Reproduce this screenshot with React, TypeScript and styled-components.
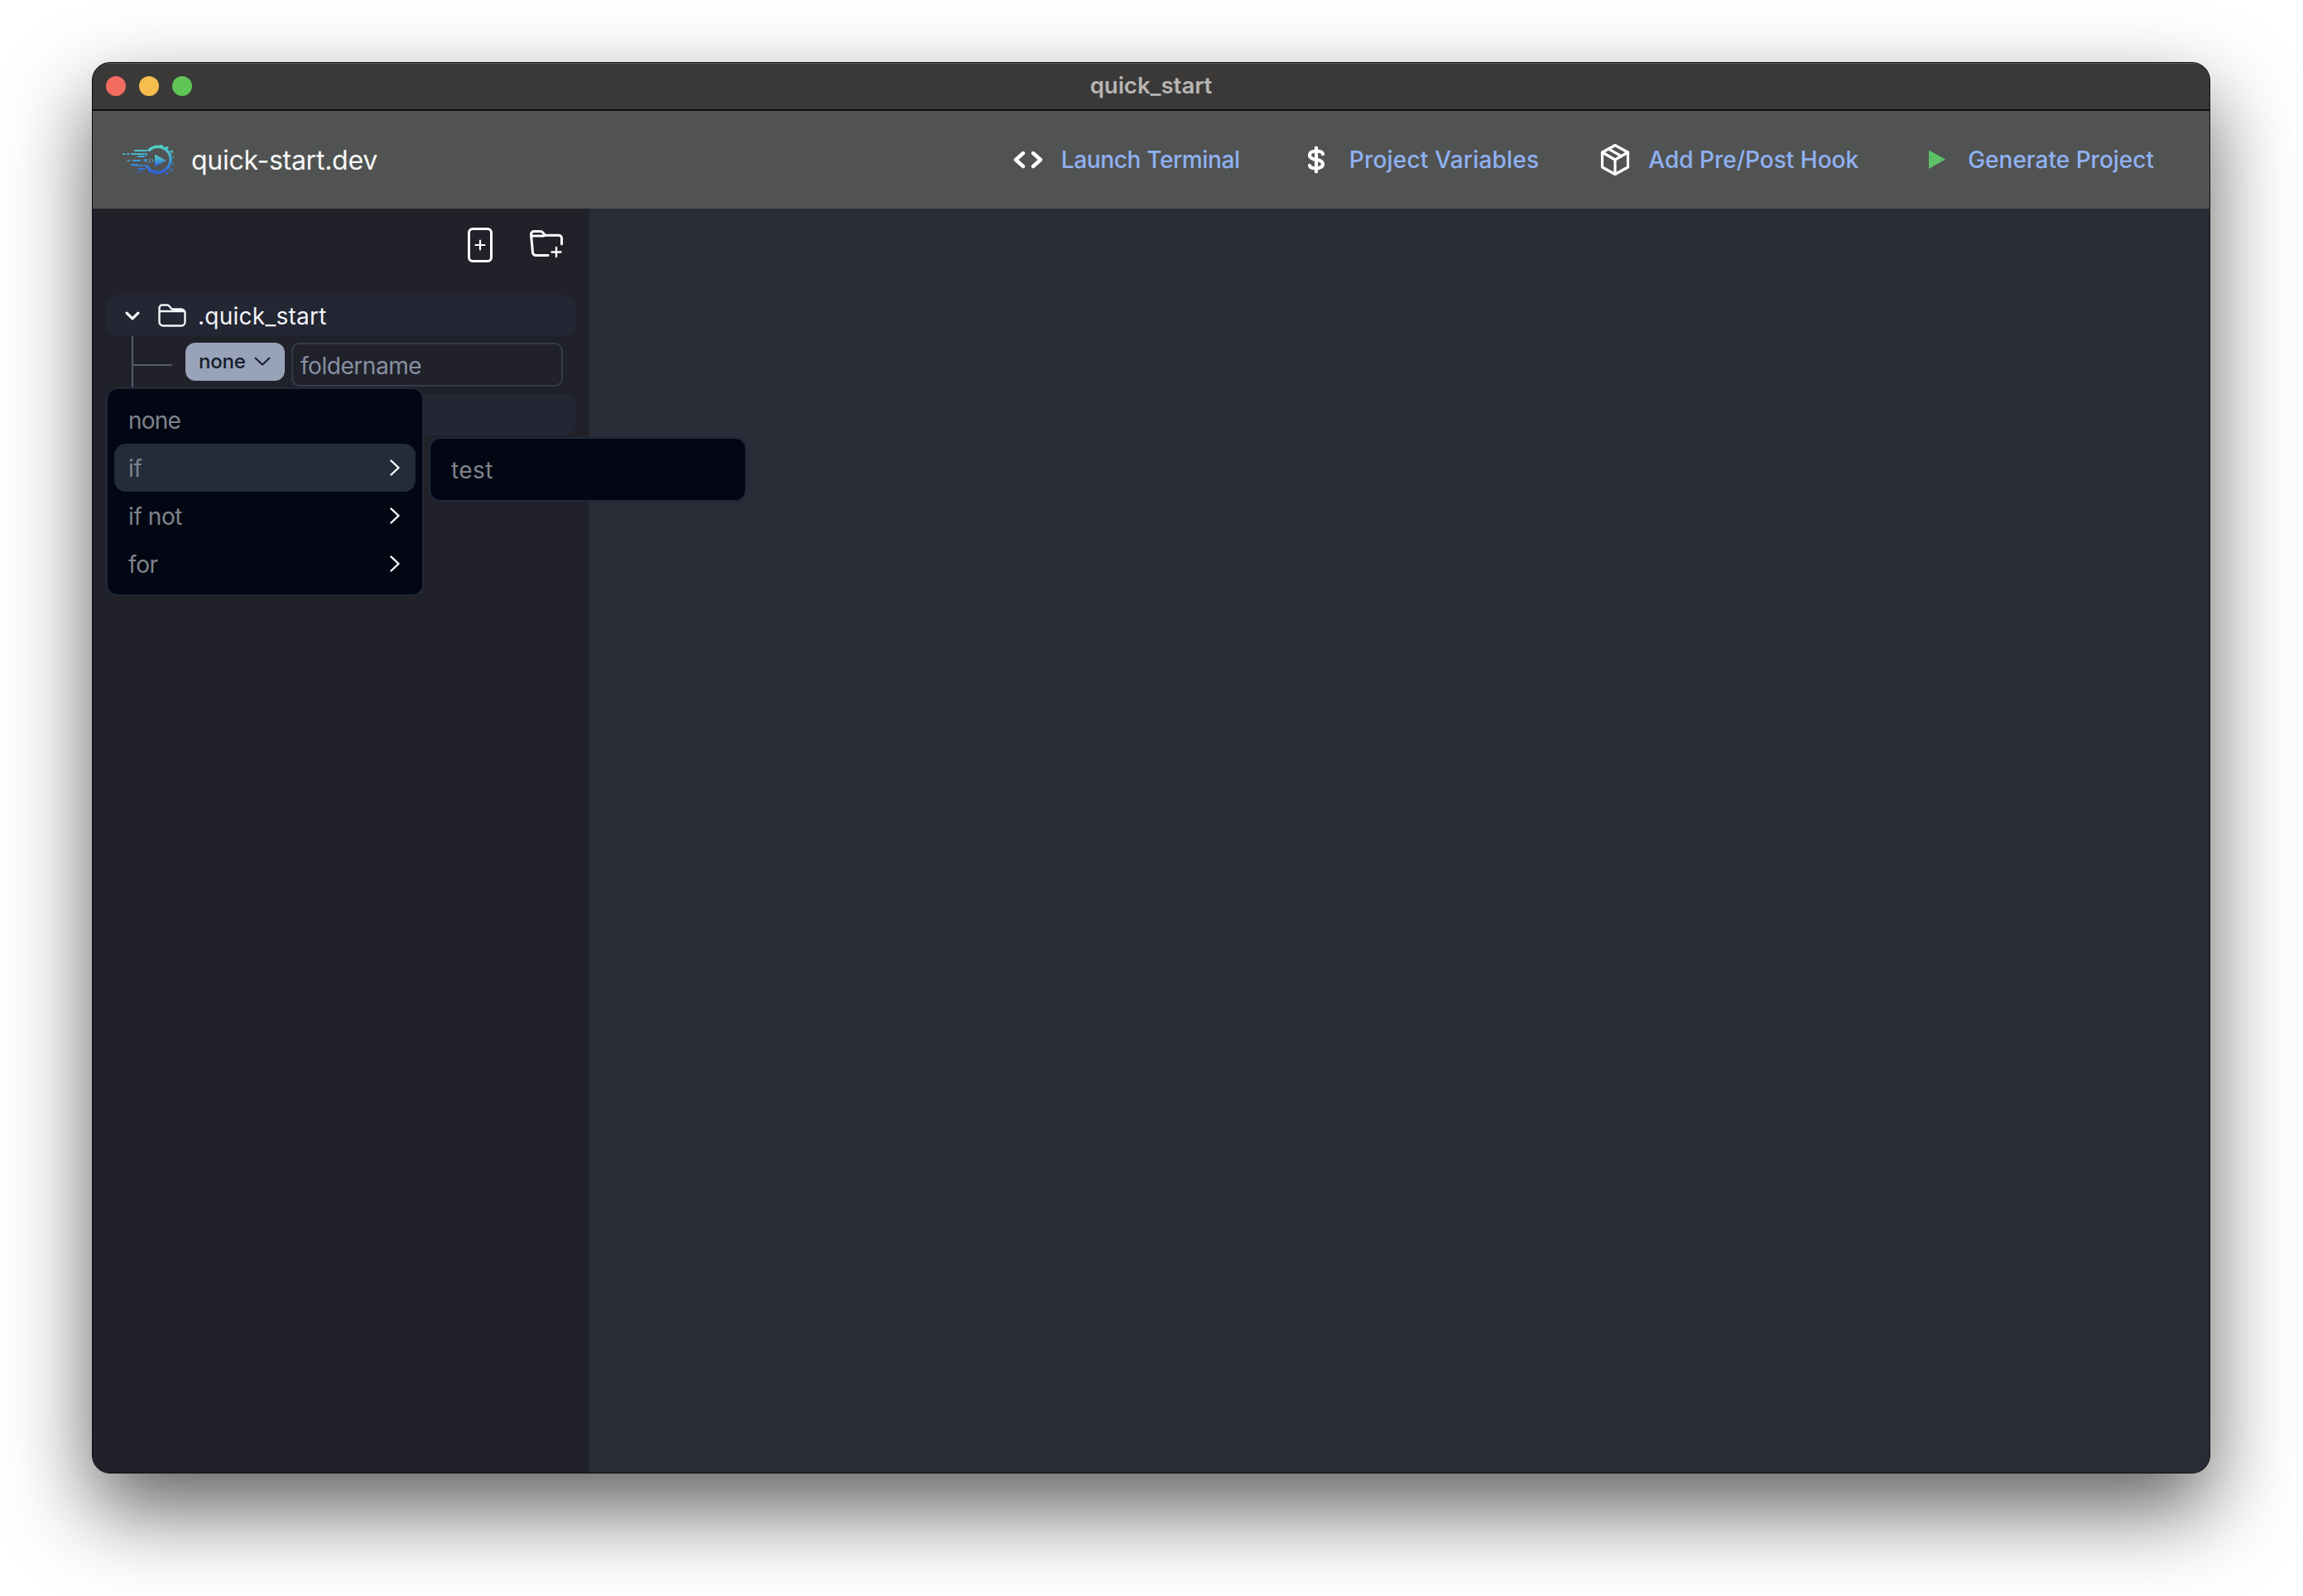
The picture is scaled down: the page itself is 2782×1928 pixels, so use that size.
import React from "react";
import styled, { createGlobalStyle } from "styled-components";

const Global = createGlobalStyle`
  html, body { margin: 0; padding: 0; background: #fff; width: 2782px; height: 1928px; overflow: hidden; }
  #root { width: 100%; height: 100%; }
  * { box-sizing: border-box; }
`;

const Desktop = styled.div`
  width: 2782px;
  height: 1928px;
  padding: 75px 112px 148px 111px;
  background: #fff;
  font-family: Inter, "Liberation Sans", sans-serif;
`;

const Window = styled.div`
  width: 100%;
  height: 100%;
  display: flex;
  flex-direction: column;
  border: 1px solid #0c0c0c;
  border-radius: 22px;
  overflow: hidden;
  background: #292b36;
  box-shadow: 0 44px 100px rgba(0, 0, 0, 0.62);
`;

const TitleBar = styled.div`
  position: relative;
  flex: 0 0 58px;
  display: flex;
  align-items: center;
  justify-content: center;
  background: #3a3938;
  border-bottom: 2px solid #0e0e0e;
  box-shadow: inset 0 1px 0 #5e5e5e;
`;

const Lights = styled.div`
  position: absolute;
  left: 16px;
  top: 16px;
  display: flex;
  gap: 16px;
`;

const Light = styled.span<{ $c: string }>`
  width: 24px;
  height: 24px;
  border-radius: 50%;
  background: ${(p) => p.$c};
`;

const WindowTitle = styled.div`
  font-size: 27.5px;
  font-weight: 600;
  color: #b6b6b4;
  transform: translateY(-1px);
`;

const Header = styled.header`
  flex: 0 0 118px;
  display: flex;
  align-items: center;
  justify-content: space-between;
  padding: 0 67px 0 36px;
  background: #515352;
`;

const Brand = styled.div`
  display: flex;
  align-items: center;
  gap: 21px;
`;

const BrandName = styled.div`
  font-size: 32px;
  font-weight: 400;
  letter-spacing: -0.25px;
  color: #f7f8f8;
`;

const Nav = styled.nav`
  display: flex;
  align-items: center;
  gap: 72px;
`;

const NavItem = styled.div<{ $track?: number }>`
  display: flex;
  align-items: center;
  gap: 20px;
  font-size: 28px;
  font-weight: 500;
  letter-spacing: ${(p) => p.$track ?? 0}px;
  color: #8fb1f2;
`;

const NavIcon = styled.span`
  width: 40px;
  height: 40px;
  display: flex;
  align-items: center;
  justify-content: center;
`;

const Body = styled.div`
  flex: 1;
  display: flex;
  min-height: 0;
`;

const Sidebar = styled.aside`
  position: relative;
  flex: 0 0 600px;
  padding: 0 16px;
  background: #21212a;
`;

const Main = styled.main`
  flex: 1;
  background: #292b36;
  border-left: 1px solid #2a2f3d;
`;

const Toolbar = styled.div`
  height: 104px;
  display: flex;
  justify-content: flex-end;
  align-items: flex-start;
  gap: 45px;
  padding: 23px 16px 0 0;
`;

const FolderAddWrap = styled.span`
  display: block;
  margin-top: 3px;
  line-height: 0;
`;

const TreeRow = styled.div`
  height: 50px;
  display: flex;
  align-items: center;
  padding: 2px 0 0 23px;
  background: #232633;
  border-radius: 14px;
  font-size: 28px;
  letter-spacing: 0.25px;
  color: #f4f5f7;
`;

const TreeChevron = styled.span`
  display: flex;
  margin-top: -2px;
`;

const FolderIcon = styled.svg`
  margin: -2px 14px 0 22px;
`;

const ChildRow = styled.div`
  height: 70px;
  display: flex;
  align-items: flex-start;
  padding-left: 31px;
`;

const Connector = styled.div`
  position: relative;
  flex: 0 0 49px;
  height: 63px;
  margin-right: 16px;
  border-left: 2px solid #555b69;
  &::after {
    content: "";
    position: absolute;
    left: 0;
    right: 0;
    top: 34px;
    height: 2px;
    background: #555b69;
  }
`;

const SelectButton = styled.div`
  flex: 0 0 120px;
  height: 46px;
  margin-top: 8px;
  display: flex;
  align-items: center;
  gap: 10px;
  padding-left: 16px;
  padding-bottom: 2px;
  border-radius: 12px;
  background: #98a2b8;
  font-size: 24px;
  font-weight: 500;
  letter-spacing: -0.2px;
  color: #161c2b;
`;

const NameInput = styled.div`
  flex: 0 0 328px;
  height: 53px;
  margin: 8px 0 0 8px;
  display: flex;
  align-items: center;
  padding: 2px 0 0 9px;
  border: 2px solid #343b4a;
  border-radius: 10px;
  font-size: 28px;
  letter-spacing: -0.45px;
  color: #8690a3;
`;

const EmptyRow = styled(TreeRow)``;

const Menu = styled.div<{ $left: number; $top: number }>`
  position: absolute;
  left: ${(p) => p.$left}px;
  top: ${(p) => p.$top}px;
  width: 384px;
  padding: 8px;
  background: #020713;
  border: 2px solid #1e293b;
  border-radius: 14px;
`;

const MenuItem = styled.div<{ $active?: boolean; $track?: number }>`
  height: 58px;
  display: flex;
  align-items: center;
  justify-content: space-between;
  padding: 2px 19px 0 17px;
  border-radius: 14px;
  background: ${(p) => (p.$active ? "#222c3b" : "transparent")};
  font-size: 28px;
  letter-spacing: ${(p) => p.$track ?? -0.4}px;
  color: #7f848b;
`;

const MenuChevron = styled.svg`
  margin-top: -2px;
`;

const Logo = () => (
  <svg width="62" height="36" viewBox="0 0 62 36" fill="none">
    <defs>
      <linearGradient id="lg" x1="0" y1="0" x2="0" y2="1">
        <stop offset="0" stopColor="#55d8c4" />
        <stop offset="0.5" stopColor="#3fa0cf" />
        <stop offset="1" stopColor="#2c55d4" />
      </linearGradient>
      <linearGradient id="pl" x1="0" y1="0" x2="0" y2="36" gradientUnits="userSpaceOnUse">
        <stop offset="0" stopColor="#55d8c4" />
        <stop offset="0.5" stopColor="#3f9fd6" />
        <stop offset="1" stopColor="#2c55d4" />
      </linearGradient>
    </defs>
    <g stroke="url(#pl)" strokeWidth="2" strokeLinecap="round">
      <path d="M1 11h1.5M6 11h1.5M15 7h14M11 11h15M19 14h7M13 19h8M11 24h7M19 29h7" />
      <path d="M6 19h3M15 25h12M21 32h2M16 33h1" strokeWidth="1.6" />
    </g>
    <circle cx="45" cy="19" r="18" stroke="url(#pl)" strokeWidth="2.6" strokeDasharray="3 4.4" transform="rotate(10 45 19)" />
    <path d="M31 7.5A15.5 15.5 0 1 1 29 25" stroke="url(#pl)" strokeWidth="3.4" fill="none" />
    <path d="M39 11.5 53 19 39 26.5z" fill="url(#lg)" />
    <path d="M30 17l-2 2 2 2M33.5 16.5l-1.5 5M35.5 17l2 2-2 2" stroke="#54b4d2" strokeWidth="1" />
  </svg>
);

const CodeIcon = () => (
  <svg width="36" height="22" viewBox="0 0 36 22" fill="none" stroke="#fff" strokeWidth="4.4" strokeLinecap="round" strokeLinejoin="round">
    <path d="M12 3 3 11l9 8M24 3l9 8-9 8" />
  </svg>
);

const DollarIcon = () => (
  <svg width="22" height="34" viewBox="0 0 22 34" fill="none" stroke="#fff" strokeWidth="4.2" strokeLinecap="round">
    <path d="M11 2.500v29" />
    <path d="M19 10C18.500 7.500 15.500 6.500 11 6.500 6 6.500 3 8.300 3 11.700c0 3.100 2.800 4.300 8 5.200 5.200.9 8 2.100 8 5.200 0 3.400-3 5.200-8 5.200-4.500 0-7.500-1-8-3.500" />
  </svg>
);

const PackageIcon = () => (
  <svg width="40" height="40" viewBox="0 0 40 40" fill="none" stroke="#fff" strokeWidth="3.2" strokeLinejoin="round" strokeLinecap="round">
    <path d="M20 2.500 35.500 11v18L20 37.500 4.500 29V11z" />
    <path d="M4.500 11 20 20l15.500-9M20 20v17.500M12 6.800l15.500 8.800" />
  </svg>
);

const PlayIcon = () => (
  <svg width="40" height="24" viewBox="0 0 40 24">
    <path d="M13 0.500 33 11.500 13 23z" fill="#5cc066" />
  </svg>
);

const FileAddIcon = () => (
  <svg width="30" height="42" viewBox="0 0 30 42" fill="none" stroke="#fff" strokeWidth="3" strokeLinecap="round">
    <rect x="1.500" y="1.500" width="27" height="39" rx="4.500" />
    <path d="M15 15.500v11M9.500 21h11" strokeWidth="2.200" />
  </svg>
);

const FolderAddIcon = () => (
  <svg width="40" height="34" viewBox="0 0 40 34" fill="none" stroke="#fff" strokeWidth="3" strokeLinecap="round" strokeLinejoin="round">
    <path d="M22 30.500H7.500a4 4 0 0 1-4-3.500L1.500 5a3.500 3.500 0 0 1 3.500-3.500h8c2 0 2.700 1 3.700 2.500.8 1.500 1.800 2.300 3.500 2.300H35a3.500 3.500 0 0 1 3.500 3.500v7M1.800 7h15" />
    <path d="M32 21v11M26.500 26.500h11" strokeWidth="2.400" />
  </svg>
);

const ChevronDown = ({ w, h, sw, color }: { w: number; h: number; sw: number; color: string }) => (
  <svg width={w} height={h} viewBox={`0 0 ${w} ${h}`} fill="none" stroke={color} strokeWidth={sw} strokeLinecap="round" strokeLinejoin="round">
    <path d={`M${sw / 2 + 0.5} ${sw / 2 + 0.5} ${w / 2} ${h - sw / 2 - 0.5} ${w - sw / 2 - 0.5} ${sw / 2 + 0.5}`} />
  </svg>
);

const ChevronRight = () => (
  <MenuChevron width="12" height="20" viewBox="0 0 12 20" fill="none" stroke="#fff" strokeWidth="2.400" strokeLinecap="round" strokeLinejoin="round">
    <path d="M1.500 1.500 10.500 10l-9 8.500" />
  </MenuChevron>
);

export default function App() {
  return (
    <Desktop>
      <Global />
      <Window>
        <TitleBar>
          <Lights>
            <Light $c="#f26d5f" />
            <Light $c="#f6bd4f" />
            <Light $c="#60c554" />
          </Lights>
          <WindowTitle>quick_start</WindowTitle>
        </TitleBar>
        <Header>
          <Brand>
            <Logo />
            <BrandName>quick-start.dev</BrandName>
          </Brand>
          <Nav>
            <NavItem $track={-0.35}><NavIcon><CodeIcon /></NavIcon>Launch Terminal</NavItem>
            <NavItem $track={0.2}><NavIcon><DollarIcon /></NavIcon>Project Variables</NavItem>
            <NavItem><NavIcon><PackageIcon /></NavIcon>Add Pre/Post Hook</NavItem>
            <NavItem><NavIcon><PlayIcon /></NavIcon>Generate Project</NavItem>
          </Nav>
        </Header>
        <Body>
          <Sidebar>
            <Toolbar>
              <FileAddIcon />
              <FolderAddWrap><FolderAddIcon /></FolderAddWrap>
            </Toolbar>
            <TreeRow>
              <TreeChevron><ChevronDown w={18} h={11} sw={3.2} color="#fff" /></TreeChevron>
              <FolderIcon width="34" height="28" viewBox="0 0 34 28" fill="none" stroke="#f4f5f7" strokeWidth="2.400" strokeLinecap="round" strokeLinejoin="round">
                <path d="M1.500 9.500V5A3.500 3.500 0 0 1 5 1.500h6c1.800 0 2.600 1 3.500 2.500.8 1.500 1.800 2.500 3.500 2.500H28a4.500 4.500 0 0 1 4.500 4.500V22a4.500 4.500 0 0 1-4.500 4.500H6A4.500 4.500 0 0 1 1.500 22zM1.800 9h30" />
              </FolderIcon>
              .quick_start
            </TreeRow>
            <ChildRow>
              <Connector />
              <SelectButton>
                none
                <ChevronDown w={20} h={11} sw={2} color="#161c2b" />
              </SelectButton>
              <NameInput>foldername</NameInput>
            </ChildRow>
            <EmptyRow />
            <Menu $left={16} $top={216}>
              <MenuItem $track={-0.8}>none</MenuItem>
              <MenuItem $active>if<ChevronRight /></MenuItem>
              <MenuItem>if not<ChevronRight /></MenuItem>
              <MenuItem>for<ChevronRight /></MenuItem>
            </Menu>
            <Menu $left={406} $top={276}>
              <MenuItem $track={0.4}>test</MenuItem>
            </Menu>
          </Sidebar>
          <Main />
        </Body>
      </Window>
    </Desktop>
  );
}
